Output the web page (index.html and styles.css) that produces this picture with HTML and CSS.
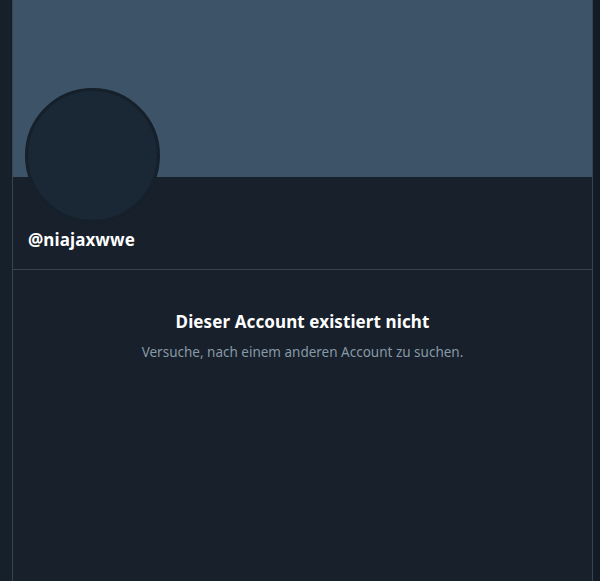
FILE: index.html
```html
<!DOCTYPE html>
<html lang="de">
<head>
<meta charset="utf-8">
<link rel="stylesheet" href="styles.css">
</head>
<body>
<div class="page">
  <main class="column">
    <div class="banner"></div>
    <div class="profile">
      <div class="avatar"></div>
      <div class="handle">@niajaxwwe</div>
    </div>
    <div class="empty">
      <h2 class="empty-title">Dieser Account existiert nicht</h2>
      <p class="empty-text">Versuche, nach einem anderen Account zu suchen.</p>
    </div>
  </main>
  <div class="side"></div>
</div>
</body>
</html>
```
FILE: styles.css
```css
html, body {
  margin: 0;
  padding: 0;
  background: #15202b;
  height: 100%;
  overflow: hidden;
}
.page {
  display: flex;
  height: 581px;
  padding-left: 12px;
  font-family: "Noto Sans", "Open Sans", sans-serif;
}
.column {
  width: 579px;
  border-left: 1px solid #38444d;
  border-right: 1px solid #38444d;
  background: #17202b;
  display: flex;
  flex-direction: column;
}
.side {
  flex: 1;
  background: #131c26;
}
.banner {
  height: 177px;
  background: #3d5468;
  flex-shrink: 0;
}
.profile {
  padding: 0 12px;
  border-bottom: 1px solid #38444d;
  height: 93px;
  box-sizing: border-box;
}
.avatar {
  width: 135px;
  height: 135px;
  box-sizing: border-box;
  border-radius: 50%;
  background: #1a2734;
  border: 3px solid #15202b;
  margin-top: -89px;
}
.handle {
  margin: 6px 0 0 3px;
  color: #ffffff;
  font-weight: 700;
  font-size: 17px;
  line-height: 22px;
  letter-spacing: 0.1px;
}
.empty {
  text-align: center;
  padding-top: 40px;
}
.empty-title {
  margin: 0;
  color: #ffffff;
  font-size: 17px;
  font-weight: 700;
  line-height: 24px;
  letter-spacing: 0.1px;
}
.empty-text {
  margin: 8px 0 0;
  color: #8899a6;
  font-size: 13.5px;
  line-height: 20px;
}
```
